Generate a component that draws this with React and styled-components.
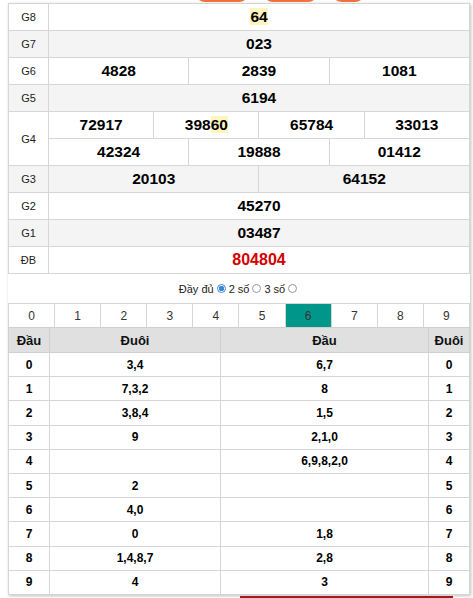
import React from 'react';
import styled, { createGlobalStyle } from 'styled-components';

const GlobalStyle = createGlobalStyle`
  body {
    margin: 0;
    background: #fff;
    font-family: 'Liberation Sans', Arial, sans-serif;
    color: #222;
  }
`;

const Page = styled.div`
  width: 462px;
  margin-left: 8px;
`;

const ButtonBar = styled.div`
  display: flex;
  gap: 14px;
  padding-left: 187px;
  margin-top: -22px;
  height: 25px;
`;

const TopButton = styled.button`
  width: ${(p) => p.w}px;
  height: 24px;
  border: none;
  border-radius: 0 0 10px 10px;
  background: #f3703c;
  padding: 0;
`;

const Card = styled.div`
  background: #fff;
  box-shadow: 1px 1px 3px rgba(0, 0, 0, 0.25);
`;

const PrizeTable = styled.table`
  width: 100%;
  border-collapse: collapse;
  table-layout: fixed;
`;

const PrizeRow = styled.tr`
  background: ${(p) => (p.alt ? '#f4f4f4' : '#fff')};
`;

const Label = styled.td`
  width: 40px;
  height: 26px;
  padding: 0;
  border: 1px solid #d6d6d6;
  text-align: center;
  font-size: 11px;
  color: #222;
`;

const Num = styled.td`
  height: 26px;
  padding: 0;
  border: 1px solid #d6d6d6;
  text-align: center;
  font-size: ${(p) => (p.special ? '16px' : '15.5px')};
  font-weight: bold;
  color: ${(p) => (p.special ? '#d40000' : '#000')};
`;

const Mark = styled.span`
  background: #fff6bd;
`;

const Options = styled.div`
  display: flex;
  align-items: center;
  justify-content: center;
  height: 29px;
  font-size: 11px;
  color: #222;
  gap: 1px;
`;

const Radio = styled.span`
  display: inline-block;
  box-sizing: border-box;
  width: 9px;
  height: 9px;
  margin: 0 2px 0 2px;
  border-radius: 50%;
  border: 1px solid ${(p) => (p.checked ? '#3b86d6' : '#9a9a9a')};
  background: ${(p) => (p.checked ? 'radial-gradient(circle, #3b86d6 0 2.5px, #fff 3px)' : '#fff')};
`;

const Tabs = styled.div`
  display: grid;
  grid-template-columns: repeat(10, 1fr);
  border-top: 1px solid #d6d6d6;
  border-left: 1px solid #d6d6d6;
`;

const Tab = styled.div`
  height: 23px;
  display: flex;
  align-items: center;
  justify-content: center;
  font-size: 12px;
  color: #333;
  border-right: 1px solid #d6d6d6;
  background: ${(p) => (p.active ? '#00968a' : '#fff')};
`;

const LotoTable = styled.table`
  width: 100%;
  border-collapse: collapse;
  table-layout: fixed;
`;

const Head = styled.th`
  height: 24px;
  padding: 0;
  background: #e0e0e0;
  border: 1px solid #d0d0d0;
  font-size: 13px;
  font-weight: bold;
  color: #111;
  width: ${(p) => (p.w ? `${p.w}px` : 'auto')};
`;

const Cell = styled.td`
  height: 23.2px;
  padding: 0;
  border: 1px solid #d6d6d6;
  text-align: center;
  font-size: 12px;
  font-weight: bold;
  color: #000;
`;

const FooterBar = styled.div`
  margin: 1px 0 0 232px;
  width: 213px;
  height: 4px;
  background: #a61717;
`;

const loto = [
  ['0', '3,4', '6,7', '0'],
  ['1', '7,3,2', '8', '1'],
  ['2', '3,8,4', '1,5', '2'],
  ['3', '9', '2,1,0', '3'],
  ['4', '', '6,9,8,2,0', '4'],
  ['5', '2', '', '5'],
  ['6', '4,0', '', '6'],
  ['7', '0', '1,8', '7'],
  ['8', '1,4,8,7', '2,8', '8'],
  ['9', '4', '3', '9'],
];

export default function App() {
  return (
    <Page>
      <GlobalStyle />
      <ButtonBar>
        <TopButton w={54} />
        <TopButton w={55} />
        <TopButton w={33} />
      </ButtonBar>
      <Card>
        <PrizeTable>
          <colgroup>
            <col style={{ width: 40 }} />
            {Array.from({ length: 12 }).map((_, i) => (
              <col key={i} />
            ))}
          </colgroup>
          <tbody>
            <PrizeRow>
              <Label>G8</Label>
              <Num colSpan={12}><Mark>64</Mark></Num>
            </PrizeRow>
            <PrizeRow alt>
              <Label>G7</Label>
              <Num colSpan={12}>023</Num>
            </PrizeRow>
            <PrizeRow>
              <Label>G6</Label>
              <Num colSpan={4}>4828</Num>
              <Num colSpan={4}>2839</Num>
              <Num colSpan={4}>1081</Num>
            </PrizeRow>
            <PrizeRow alt>
              <Label>G5</Label>
              <Num colSpan={12}>6194</Num>
            </PrizeRow>
            <PrizeRow>
              <Label rowSpan={2}>G4</Label>
              <Num colSpan={3}>72917</Num>
              <Num colSpan={3}>398<Mark>60</Mark></Num>
              <Num colSpan={3}>65784</Num>
              <Num colSpan={3}>33013</Num>
            </PrizeRow>
            <PrizeRow>
              <Num colSpan={4}>42324</Num>
              <Num colSpan={4}>19888</Num>
              <Num colSpan={4}>01412</Num>
            </PrizeRow>
            <PrizeRow alt>
              <Label>G3</Label>
              <Num colSpan={6}>20103</Num>
              <Num colSpan={6}>64152</Num>
            </PrizeRow>
            <PrizeRow>
              <Label>G2</Label>
              <Num colSpan={12}>45270</Num>
            </PrizeRow>
            <PrizeRow alt>
              <Label>G1</Label>
              <Num colSpan={12}>03487</Num>
            </PrizeRow>
            <PrizeRow>
              <Label>ĐB</Label>
              <Num colSpan={12} special>804804</Num>
            </PrizeRow>
          </tbody>
        </PrizeTable>
        <Options>
          Đầy đủ <Radio checked /> 2 số <Radio /> 3 số <Radio />
        </Options>
        <Tabs>
          {Array.from({ length: 10 }).map((_, i) => (
            <Tab key={i} active={i === 6}>{i}</Tab>
          ))}
        </Tabs>
        <LotoTable>
          <thead>
            <tr>
              <Head w={40}>Đầu</Head>
              <Head w={170}>Đuôi</Head>
              <Head>Đầu</Head>
              <Head w={40}>Đuôi</Head>
            </tr>
          </thead>
          <tbody>
            {loto.map((r) => (
              <tr key={r[0]}>
                {r.map((c, j) => (
                  <Cell key={j}>{c}</Cell>
                ))}
              </tr>
            ))}
          </tbody>
        </LotoTable>
      </Card>
      <FooterBar />
    </Page>
  );
}
